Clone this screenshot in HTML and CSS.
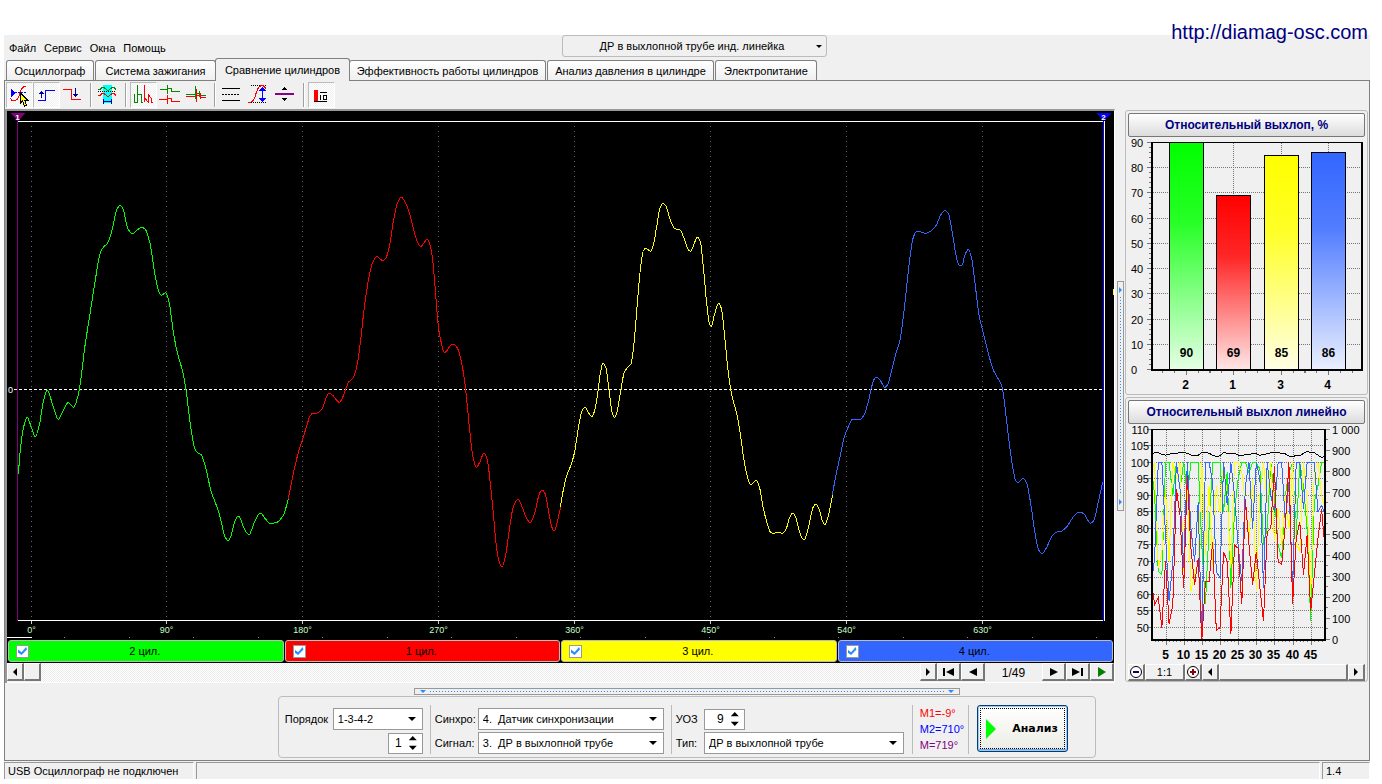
FILE: index.html
```html
<!DOCTYPE html>
<html lang="ru">
<head>
<meta charset="utf-8">
<title>Diamag — Сравнение цилиндров</title>
<link rel="stylesheet" href="styles.css">
</head>
<body>
<a class="site-link" href="http://diamag-osc.com">http://diamag-osc.com</a>
<div class="app">
  <header class="menubar">
    <nav class="menu">
      <button>Файл</button><button>Сервис</button><button>Окна</button><button>Помощь</button>
    </nav>
    <span class="pick pick-mode">
      <select aria-label="Режим"><option>ДР в выхлопной трубе инд. линейка</option></select>
    </span>
  </header>

  <nav class="tabs" role="tablist">
    <button class="tab tab-a" role="tab">Осциллограф</button>
    <button class="tab tab-b" role="tab">Система зажигания</button>
    <button class="tab tab-c active" role="tab" aria-selected="true">Сравнение цилиндров</button>
    <button class="tab tab-d" role="tab">Эффективность работы цилиндров</button>
    <button class="tab tab-e" role="tab">Анализ давления в цилиндре</button>
    <button class="tab tab-f" role="tab">Электропитание</button>
  </nav>

  <main class="page">
    <div class="toolbar">
      <button class="tool pressed" aria-label="Маркер"><svg viewBox="0 0 26 26"><path d="M4 16c2 4 7 4 9-2s3-10 7-10" stroke="#f00"/><path d="M5 7v8l4-4z" fill="#00f"/><path d="M9 10.500h11" stroke="#00f" stroke-dasharray="2 1"/><path d="M14.500 11v10l2-2 2 5 2-1-2-5h3z" fill="#ff0" stroke="#000"/></svg></button>
      <button class="tool pressed" aria-label="Фронт"><svg viewBox="0 0 26 26"><path d="M5 18.500h7.500v-10h9" stroke="#00f"/><path d="M8.500 16V10" stroke="#008"/><path d="M6 12h5L8.500 9z" fill="#008"/></svg></button>
      <button class="tool" aria-label="Спад"><svg viewBox="0 0 26 26"><path d="M3 7.500h8.500v10h9" stroke="#f00"/><path d="M15.500 6v7" stroke="#008"/><path d="M13 12h5l-2.500 3z" fill="#008"/></svg></button>
      <i class="sep"></i>
      <button class="tool" aria-label="Наложение"><svg viewBox="0 0 26 26"><path d="M8 3h9v18H8z" fill="#0ff"/><path d="M3 7.500h2l2-2h2l3 2.500h2l3-2.500h2l2 2" stroke="#080"/><path d="M3 9.500h18" stroke="#000" stroke-dasharray="1 1"/><path d="M3 13.500h2l2-2h2l3 2.500h2l3-2.500h2l2 2" stroke="#f00"/><path d="M8.500 17v5M16.500 17v5M8 19.500h9" stroke="#00a"/></svg></button>
      <i class="sep"></i>
      <button class="tool pressed" aria-label="Последовательно"><svg viewBox="0 0 26 26"><path d="M4.500 12v9M5 20.500h2.500M7.500 21V3M8 12.500h3.500v8h1.500" stroke="#080"/><path d="M14.500 12v8M14.500 18V3M15 16.500l3.500 4V12M19 13.500l2.500 3v3.500h1.500" stroke="#f00"/></svg></button>
      <button class="tool" aria-label="Каскад"><svg viewBox="0 0 26 26"><path d="M3 7.500h7.500M10.500 3v9M11 6.500h4M14.500 6v4M15 9.500h8" stroke="#080"/><path d="M2 17.500h8.500M10.500 13v9M11 16.500h4M14.500 16v4M15 19.500h8" stroke="#f00"/></svg></button>
      <button class="tool" aria-label="Вместе"><svg viewBox="0 0 26 26"><path d="M2 12.500h9M11.500 4v13M12 11.500h3M15.500 9v6M16 13.500h6" stroke="#080"/><path d="M2 14.500h9M12.500 7v13M13 13.500h4M16.500 11v6M17 15.500h5" stroke="#f00"/></svg></button>
      <i class="sep"></i>
      <button class="tool" aria-label="Линии"><svg viewBox="0 0 26 26"><path d="M3 6.500h18M3 18.500h18" stroke="#000"/><path d="M3 12.500h18" stroke="#000" stroke-dasharray="2 1"/></svg></button>
      <button class="tool" aria-label="Амплитуда"><svg viewBox="0 0 26 26"><path d="M5 3.500h16M5 20.500h16" stroke="#000" stroke-dasharray="1 1"/><path d="M2 20.500c5 0 6-2 8-9s4-8 7-8l3 3" stroke="#f00"/><path d="M16.500 7v11" stroke="#00f"/><path d="M13 9h7l-3.500-4.500zM13 16h7l-3.500 4.500z" fill="#00f"/></svg></button>
      <button class="tool" aria-label="Масштаб"><svg viewBox="0 0 26 26"><path d="M2 12h19" stroke="#808" stroke-width="2"/><path d="M8 8h6l-3-3zM8 16h6l-3 3z" fill="#000"/></svg></button>
      <i class="sep"></i>
      <button class="tool pressed" aria-label="Диаграмма"><svg viewBox="0 0 26 26"><path d="M6 8h4v11H6z" fill="#f00"/><path d="M6 19.500h13M12 10.500h7M12.500 13v5M15 13.500h3v4h-3z" stroke="#000"/></svg></button>
    </div>

    <div class="workspace">
      <section class="scope">
        <svg class="wave" viewBox="0 0 1107 528" id="wave" role="img" aria-label="Осциллограмма"></svg>
        <div class="channels">
          <label class="channel ch-green"><input type="checkbox" checked><span>2 цил.</span></label>
          <label class="channel ch-red"><input type="checkbox" checked><span>1 цил.</span></label>
          <label class="channel ch-yellow"><input type="checkbox" checked><span>3 цил.</span></label>
          <label class="channel ch-blue"><input type="checkbox" checked><span>4 цил.</span></label>
        </div>
        <div class="player">
          <button class="key k16" aria-label="Влево"><i class="arrow left"></i></button>
          <button class="key k16" aria-label="Ползунок"></button>
          <div class="track"></div>
          <button class="key k16" aria-label="Вправо"><i class="arrow right"></i></button>
          <button class="key k24" aria-label="В начало"><i class="bar"></i><i class="arrow big left"></i></button>
          <button class="key k24" aria-label="Назад"><i class="arrow big left"></i></button>
          <output class="frame-no">1/49</output>
          <button class="key k24" aria-label="Вперёд"><i class="arrow big right"></i></button>
          <button class="key k24" aria-label="В конец"><i class="arrow big right"></i><i class="bar"></i></button>
          <button class="key k24" aria-label="Воспроизвести"><i class="arrow big right play"></i></button>
        </div>
      </section>

      <div class="vsplit"><div class="grip-v"><i class="tip-r"></i><i class="dots-v"></i><i class="tip-r"></i></div></div>

      <aside class="side">
        <section class="card">
          <button class="card-title">Относительный выхлоп, %</button>
          <svg class="chart" viewBox="0 -1 237 255" id="bars" role="img" aria-label="Относительный выхлоп, %"></svg>
        </section>
        <section class="card">
          <button class="card-title">Относительный выхлоп линейно</button>
          <svg class="chart" viewBox="1 0 237 240" id="lines" role="img" aria-label="Относительный выхлоп линейно"></svg>
          <div class="zoombar">
            <button class="key k16" aria-label="Уменьшить"><svg class="lens" viewBox="0 0 14 14"><circle cx="7" cy="7" r="5.500" fill="#fff" stroke="#000"/><path d="M4 7h6" stroke="#008" stroke-width="2"/></svg></button>
            <button class="key k40">1:1</button>
            <button class="key k16" aria-label="Увеличить"><svg class="lens" viewBox="0 0 14 14"><circle cx="7" cy="7" r="5.500" fill="#fff" stroke="#000"/><path d="M4 7h6M7 4v6" stroke="#800" stroke-width="2"/></svg></button>
            <button class="key k16" aria-label="Влево"><i class="arrow left"></i></button>
            <button class="key grow" aria-label="Ползунок"></button>
            <button class="key k16" aria-label="Вправо"><i class="arrow right"></i></button>
          </div>
        </section>
      </aside>
    </div>

    <div class="grip-h"><i class="tip-d"></i><i class="dots-h"></i><i class="tip-d"></i></div>

    <form class="settings">
      <div class="col col-order">
        <div class="line"><label for="order">Порядок</label><span class="pick w90"><select id="order"><option>1-3-4-2</option></select></span></div>
        <div class="line end"><span class="spin w35"><input type="number" value="1" aria-label="Цилиндр"><i class="updown"></i></span></div>
      </div>
      <div class="col col-input">
        <div class="line"><label for="sync">Синхро:</label><span class="pick w186"><select id="sync"><option>4.&nbsp; Датчик синхронизации</option></select></span></div>
        <div class="line"><label for="signal">Сигнал:</label><span class="pick w186"><select id="signal"><option>3.&nbsp; ДР в выхлопной трубе</option></select></span></div>
      </div>
      <div class="col col-type">
        <div class="line"><label for="uoz">УОЗ</label><span class="spin w41"><input id="uoz" type="number" value="9"><i class="updown"></i></span></div>
        <div class="line"><label for="type">Тип:</label><span class="pick w200"><select id="type"><option>ДР в выхлопной трубе</option></select></span></div>
      </div>
      <div class="col col-marks">
        <span class="m-red">M1=-9°</span><span class="m-blue">M2=710°</span><span class="m-purple">M=719°</span>
      </div>
      <button class="analyze" type="button"><i class="go"></i><span>Анализ</span></button>
    </form>
  </main>

  <footer class="status">
    <span class="cell s-first">USB Осциллограф не подключен</span>
    <span class="cell s-mid"></span>
    <span class="cell s-last">1.4</span>
  </footer>
</div>
<script src="app.js"></script>
</body>
</html>
```
FILE: styles.css
```css
* { box-sizing: border-box; }
body {
  margin: 0;
  padding: 35px 12px 5px 4px;
  background: #fff;
  color: #000;
  font: 11px/14px "Liberation Sans", Arial, sans-serif;
}
button, select, input { font: inherit; color: inherit; margin: 0; padding: 0; border: 0; background: none; }
svg { display: block; fill: none; }
i { display: block; flex: none; }

.site-link {
  position: absolute;
  top: 20px;
  right: 14px;
  font-size: 20px;
  line-height: 24px;
  color: #000080;
  text-decoration: none;
}
.app { background: #f0f0f0; }

/* menu */
.menubar { display: grid; grid-template-columns: 1fr 265px 1fr; height: 22px; }
.menu { display: flex; gap: 8px; padding: 3px 0 0 5px; align-items: center; }
.pick { display: block; position: relative; height: 22px; background: #fff; border: 1px solid #999; }
.pick select { appearance: none; width: 100%; height: 100%; padding-left: 4px; }
.pick::after {
  content: "";
  position: absolute;
  right: 6px;
  top: 8px;
  border: 4px solid transparent;
  border-top-color: #000;
  border-bottom: 0;
  pointer-events: none;
}
.pick-mode { background: #f0f0f0; border-color: #bbb; border-radius: 3px; margin-left: 7px; width: 265px; }
.pick-mode select { text-align: center; text-align-last: center; padding-right: 8px; }
.pick-mode::after { right: 4px; top: 9px; border-width: 3px; border-bottom: 0; }

/* tabs */
.tabs { display: flex; align-items: flex-end; gap: 1px; padding-left: 2px; height: 23px; }
.tab {
  height: 20px;
  border: 1px solid #808080;
  border-bottom: 0;
  border-radius: 3px 3px 0 0;
  background: linear-gradient(#fff, #efefef);
  white-space: nowrap;
}
.tab.active { height: 23px; background: #f0f0f0; margin: 0 -2px -1px; position: relative; }
.tab-a { width: 88px; }
.tab-b { width: 121px; }
.tab-c { width: 135px; }
.tab-d { width: 197px; }
.tab-e { width: 167px; }
.tab-f { width: 102px; }

.page { border: 1px solid #808080; padding-bottom: 2px; }

/* toolbar */
.toolbar { display: flex; height: 28px; padding: 1px; }
.tool { width: 27px; height: 26px; border: 1px solid transparent; }
.tool svg { width: 26px; height: 26px; margin: -1px; shape-rendering: crispEdges; }
.tool.pressed {
  border-color: #bbb #fff #fff #bbb;
  background: repeating-conic-gradient(#fff 0 25%, #f0f0f0 0 50%) 0 0 / 2px 2px;
}
.sep { width: 2px; margin: 1px 3px; border-left: 1px solid #a0a0a0; border-right: 1px solid #fff; }

/* workspace */
.workspace { display: grid; grid-template-columns: minmax(0, 1fr) 10px 243px; padding-right: 1px; }
.scope { border: solid #999; border-width: 2px 1px 0 2px; border-right-color: #fff; }
.wave { width: 100%; height: auto; background: #000; }
.wave text { font-size: 9px; }
.channels { display: flex; gap: 1px; padding: 1px; background: #000; }
.channel { flex: 1; display: flex; align-items: center; height: 22px; padding: 0 22px 0 7px; border: 1px solid #bbb; border-radius: 3px; }
.channel span { flex: 1; text-align: center; }
.channel input { appearance: none; width: 13px; height: 13px; background: #fff; border: 1px solid #999; display: grid; place-items: center; }
.channel input:checked::after {
  content: "";
  width: 9px;
  height: 8px;
  background: #2a8dfa;
  clip-path: polygon(0 30%, 40% 65%, 90% 0, 100% 30%, 40% 100%, 0 70%);
}
.ch-green { background: #0f0; }
.ch-red { background: #f00; }
.ch-yellow { background: #ff0; }
.ch-blue { background: #36f; }

.key {
  display: flex;
  align-items: center;
  justify-content: center;
  gap: 1px;
  height: 18px;
  background: #f0f0f0;
  border: 1px solid #fff;
  border-right: 2px solid #777;
  border-bottom: 2px solid #777;
}
.k16 { flex: 0 0 17px; }
.k24 { flex: 0 0 24px; }
.k40 { flex: 0 0 40px; }
.grow { flex: 1; }
.player { display: flex; height: 20px; border-bottom: 1px solid #fff; }
.track { flex: 1; background: repeating-conic-gradient(#fff 0 25%, #ececec 0 50%) 0 0 / 2px 2px; }
.frame-no { flex: 0 0 57px; text-align: center; line-height: 20px; font-size: 12px; }
.arrow { border: 4px solid transparent; }
.arrow.left { border-right-color: #000; border-left: 0; }
.arrow.right { border-left-color: #000; border-right: 0; }
.arrow.big { border-width: 4px 8px; }
.arrow.big.left { border-left: 0; }
.arrow.big.right { border-right: 0; }
.arrow.play { border-left-color: #008000; border-top-width: 5px; border-bottom-width: 5px; }
.bar { width: 2px; height: 8px; background: #000; }

/* splitters */
.vsplit { display: flex; justify-content: center; align-items: center; }
.grip-v { display: flex; flex-direction: column; align-items: center; width: 7px; height: 230px; border: 1px solid #999; padding: 5px 0; gap: 4px; }
.dots-v { flex: 1; width: 1px; background: repeating-linear-gradient(#2a8dfa 0 1px, transparent 1px 3px); }
.tip-r { border: 3px solid transparent; border-left-color: #2a8dfa; border-right: 0; }
.grip-h { display: flex; align-items: center; width: 40%; height: 7px; margin: 5px auto 1px; border: 1px solid #999; padding: 0 5px; gap: 4px; }
.dots-h { flex: 1; height: 1px; background: repeating-linear-gradient(90deg, #2a8dfa 0 1px, transparent 1px 3px); }
.tip-d { border: 3px solid transparent; border-top-color: #2a8dfa; border-bottom: 0; }

/* side charts */
.side { display: flex; flex-direction: column; gap: 2px; padding-top: 1px; }
.card { border: 1px solid #bbb; border-radius: 3px; padding: 2px; }
.card:last-child { padding-bottom: 0; }
.card-title {
  display: block;
  width: 100%;
  height: 24px;
  border: 1px solid #777;
  border-radius: 2px;
  background: linear-gradient(#fff, #dcdcdc);
  color: #000080;
  font-size: 12px;
  font-weight: bold;
}
.chart { width: 100%; height: auto; }
.chart text { fill: #000; font-size: 11px; }
.chart .strong { font-size: 12px; font-weight: bold; }
.zoombar { display: flex; }
.zoombar .key { height: 17px; }
.lens { flex: none; width: 14px; height: 14px; }

/* settings */
.settings {
  display: flex;
  width: fit-content;
  margin: 0 auto;
  padding: 8px 27px 3px 6px;
  border: 1px solid #bbb;
  border-radius: 4px;
}
.col { display: flex; flex-direction: column; gap: 2px; padding: 3px 7px 0 0; margin-right: 4px; border-right: 1px solid #bbb; }
.line { display: flex; align-items: center; justify-content: space-between; height: 22px; }
.line.end { justify-content: flex-end; }
.col-order .line { width: 138px; }
.col-input .line { width: 229px; }
.col-type .line { justify-content: flex-start; }
.col-type label { width: 28px; }
.col-type { padding-right: 8px; margin-right: 7px; }
.w35 { width: 35px; }
.w41 { width: 41px; }
.w90 { width: 90px; }
.w186 { width: 186px; }
.w200 { width: 200px; }
.spin { display: flex; align-items: center; height: 21px; background: #fff; border: 1px solid #999; }
.spin input { appearance: textfield; flex: 1; width: 10px; text-align: right; font-size: 12px; padding-right: 4px; }
.spin input::-webkit-inner-spin-button { display: none; }
.updown { width: 8px; height: 14px; margin: 0 5px 0 3px; background: #000; clip-path: polygon(50% 0, 100% 30%, 0 30%, 50% 0, 50% 100%, 0 70%, 100% 70%, 50% 100%); }
.col-marks { gap: 0; padding: 0 4px 0 0; margin-right: 8px; }
.col-marks span { line-height: 16px; }
.m-red { color: #f00; }
.m-blue { color: #00f; }
.m-purple { color: #800080; }
.analyze {
  display: flex;
  align-items: center;
  width: 91px;
  height: 47px;
  padding: 0 9px 0 8px;
  gap: 16px;
  border: 1px solid #003c74;
  border-radius: 3px;
  background: linear-gradient(#fff, #ecece4);
  box-shadow: inset 0 0 0 1px #9cc8f8, inset 0 -2px 0 #6aa8e8;
  outline: 1px dotted #000;
  outline-offset: -4px;
  font-family: "DejaVu Sans", sans-serif;
  font-weight: bold;
}
.go { border: 10px solid transparent; border-left-color: #0f0; border-right: 0; }

/* status */
.status { display: flex; gap: 2px; padding: 1px 0 0; height: 18px; }
.cell { border: solid #999; border-width: 1px 0 0 1px; padding-left: 3px; line-height: 16px; border-right: 1px solid #fff; }
.s-first { width: 190px; }
.s-mid { flex: 1; }
.s-last { width: 48px; }
```
FILE: app.js
```js
const NS = "http://www.w3.org/2000/svg";

function add(parent, tag, attrs, text) {
  const el = document.createElementNS(NS, tag);
  for (const key in attrs) el.setAttribute(key, attrs[key]);
  if (text !== undefined) el.textContent = text;
  parent.appendChild(el);
  return el;
}
function line(parent, x1, y1, x2, y2, stroke, extra) {
  return add(parent, "path", Object.assign({ d: `M${x1} ${y1}L${x2} ${y2}`, stroke, "shape-rendering": "crispEdges" }, extra));
}

/* Monotone cubic curve: no overshoot at peaks and troughs. */
function smooth(pts) {
  const n = pts.length, s = [], m = [];
  for (let i = 0; i < n - 1; i++) s.push((pts[i + 1][1] - pts[i][1]) / (pts[i + 1][0] - pts[i][0]));
  m[0] = s[0];
  m[n - 1] = s[n - 2];
  for (let i = 1; i < n - 1; i++) m[i] = s[i - 1] * s[i] <= 0 ? 0 : 2 * s[i - 1] * s[i] / (s[i - 1] + s[i]);
  let d = `M${pts[0]}`;
  for (let i = 0; i < n - 1; i++) {
    const [x0, y0] = pts[i], [x1, y1] = pts[i + 1], h = (x1 - x0) / 3;
    d += `C${(x0 + h).toFixed(2)} ${(y0 + m[i] * h).toFixed(2)} ${(x1 - h).toFixed(2)} ${(y1 - m[i + 1] * h).toFixed(2)} ${x1.toFixed(2)} ${y1.toFixed(2)}`;
  }
  return d;
}

/* Samples are x,y pairs, three units to a screen pixel, from each channel's start. */
const channels = [
  { color: "#0f0", start: -7, samples: "55,882 62,800 70,745 81,712 95,745 106,770 118,735 130,665 142,631 158,675 175,718 190,690 205,668 221,682 232,655 240,615 256,490 268,415 285,305 302,215 312,200 322,190 335,155 350,90 360,76 368,84 384,147 397,161 412,150 424,142 436,148 450,190 465,285 475,330 484,346 497,338 506,360 520,455 530,510 548,575 558,630 572,740 584,805 592,818 604,825 615,855 635,940 645,965 660,1010 675,1070 684,1082 692,1070 706,1020 716,1008 732,1045 747,1064 762,1030 781,999 795,1015 810,1030 828,1028 850,1006 865,957" },
  { color: "#f00", start: 273, samples: "25,957 35,905 48,845 60,800 68,778 80,738 90,708 98,700 112,699 127,685 138,655 148,639 160,648 178,667 188,652 198,625 206,606 216,598 225,580 233,545 242,480 252,390 262,320 270,275 280,243 291,229 300,237 309,242 318,234 328,200 340,125 352,70 364,52 378,72 390,105 400,145 412,185 422,200 431,190 442,177 450,195 458,240 466,330 474,430 482,480 493,518 502,510 512,496 521,492 535,510 547,560 556,620 568,740 578,825 589,862 600,845 612,819 622,840 632,920 640,1000 648,1090 656,1140 666,1161 676,1130 688,1050 700,980 714,957 726,980 740,1015 751,1028 765,995 778,942 786,930 795,940 805,990 815,1040 823,1053 832,1025 842,980" },
  { color: "#ff0", start: 543, samples: "31,980 40,930 50,888 63,855 73,820 85,745 95,695 105,682 115,697 125,710 134,692 143,640 151,580 159,549 168,565 177,630 186,695 194,713 201,695 212,635 222,580 232,563 243,552 252,490 262,370 272,260 280,212 288,205 302,214 311,190 320,140 330,85 339,70 348,78 360,118 375,146 390,150 402,175 414,208 421,214 430,198 442,171 451,185 460,260 470,370 478,430 484,439 493,405 506,370 514,385 524,470 534,570 545,645 560,700 570,755 582,840 594,897 603,914 618,901 628,920 638,975 650,1025 662,1057 672,1060 683,1057 698,1060 708,1048 720,1010 729,999 738,1015 750,1060 762,1080 771,1060 782,1010 790,980 798,972 808,990 817,1022 825,1034 833,1015 848,945" },
  { color: "#36f", start: 813, samples: "37,945 47,890 60,830 72,775 86,738 97,718 120,718 132,705 145,665 155,620 163,597 170,591 180,600 195,622 204,612 215,570 228,520 240,480 250,410 260,320 270,230 280,172 290,154 303,156 315,160 330,155 348,137 362,105 375,91 386,103 398,165 410,235 417,255 426,255 435,224 445,208 455,235 465,310 478,410 490,460 505,520 520,570 535,597 546,620 556,690 568,790 578,860 587,902 594,908 609,895 620,910 632,970 645,1060 656,1110 666,1121 680,1102 695,1070 710,1056 725,1053 742,1038 762,1008 778,996 790,1000 812,1030 821,1022 835,965 848,907" }
];

function drawWave() {
  const svg = document.getElementById("wave");
  for (let i = 0; i < 8; i++) {
    const x = (i ? 159.5 + (i - 1) * 136 : 24.5);
    line(svg, x, 15, x, 509, "#666", { "stroke-dasharray": "1 4" });
    line(svg, x, 510, x, 513, "#ccc");
    add(svg, "text", { x, y: 522, fill: "#c8ffc8", "text-anchor": "middle" }, i * 90 + "°");
  }
  for (let x = 57; x < 1107; x += 64.5) line(svg, x, 526.5, x + 1, 526.5, "#888");
  line(svg, 0, 526.5, 25, 526.5, "#fff");
  line(svg, 11, 10.5, 1097, 10.5, "#fff");
  line(svg, 11, 509.5, 1098, 509.5, "#fff");
  line(svg, 1097.5, 10, 1097.5, 510, "#fff");
  line(svg, 1096.5, 10, 1096.5, 510, "#00f");
  line(svg, 10.5, 4, 10.5, 510, "#800080");
  line(svg, 7, 278.5, 1097, 278.5, "#fff", { "stroke-dasharray": "3 2" });
  add(svg, "text", { x: 1, y: 282, fill: "#fff" }, "0");
  line(svg, 1106.5, 178, 1106.5, 184, "#ff0");
  for (const ch of channels) {
    const pts = ch.samples.split(" ").map(p => {
      const [x, y] = p.split(",").map(Number);
      return [ch.start + x / 3, 69 + y / 3];
    });
    add(svg, "path", { d: smooth(pts), stroke: ch.color, "shape-rendering": "crispEdges" });
  }
  for (const [x, color, label] of [[10.5, "#800080", "1"], [1096.5, "#00f", "2"]]) {
    add(svg, "path", { d: `M${x - 7} 2h15l-7.500 8z`, fill: color });
    add(svg, "text", { x, y: 9, fill: "#fff", "text-anchor": "middle", style: "font-size:8px;font-weight:bold" }, label);
  }
}

function drawBars() {
  const svg = document.getElementById("bars");
  const top = 4.5, bottom = 231.5, left = 23, right = 234;
  const y = v => Math.round(bottom - v * (bottom - top) / 90 - 0.5) + 0.5;
  const defs = add(svg, "defs", {});
  for (let v = 0; v <= 90; v += 10) {
    if (v && v < 90) line(svg, left, y(v), right, y(v), "#777", { "stroke-dasharray": "1 1" });
    line(svg, 19, y(v), left, y(v), "#777");
    for (let k = 2; k < 10 && v < 90; k += 2) line(svg, 21, y(v + k), left, y(v + k), "#777");
    add(svg, "text", { x: 3, y: y(v) + 4 }, v);
  }
  const bars = [["2", 90, "#00ff00", 58.5], ["1", 69, "#ff0000", 105.5], ["3", 85, "#ffff00", 153.5], ["4", 86, "#3366ff", 200.5]];
  bars.forEach(([name, value, color, x], i) => {
    const g = add(defs, "linearGradient", { id: "fill" + i, x1: 0, y1: 0, x2: 0, y2: 1 });
    add(g, "stop", { offset: 0, "stop-color": color });
    add(g, "stop", { offset: 0.35, "stop-color": color, "stop-opacity": 0.85 });
    add(g, "stop", { offset: 1, "stop-color": color, "stop-opacity": 0.1 });
    line(svg, x, top, x, bottom, "#777", { "stroke-dasharray": "1 1" });
    add(svg, "rect", { x: x - 17, y: y(value), width: 34, height: bottom - y(value), fill: "#fff" });
    add(svg, "rect", { x: x - 17, y: y(value), width: 34, height: bottom - y(value), fill: `url(#fill${i})`, stroke: "#000", "shape-rendering": "crispEdges" });
    add(svg, "text", { x, y: 219, class: "strong", "text-anchor": "middle" }, value);
    add(svg, "text", { x: x - 1, y: 251, class: "strong", "text-anchor": "middle" }, name);
    for (let k = -24; k <= 24; k += 12) line(svg, x + k, 232, x + k, k ? 235 : 237, "#777");
  });
  add(svg, "path", { d: "M23 4.500H235", stroke: "#000", "shape-rendering": "crispEdges" });
  add(svg, "path", { d: "M24 4V232H234V4", stroke: "#000", "stroke-width": 2, "shape-rendering": "crispEdges" });
}

const history = {
  "#00ff00": [100, 90, 67, 66, 100, 100, 90, 100, 92, 100, 90, 100, 100, 100, 75, 57, 80, 100, 100, 100, 85, 97, 62, 85, 95, 100, 100, 97, 100, 100, 98, 75, 80, 100, 90, 75, 71, 90, 97, 100, 78, 100, 93, 80, 52, 88, 93, 100, 100],
  "#ffff00": [97, 100, 68, 73, 92, 70, 100, 95, 100, 67, 95, 61, 66, 70, 100, 72, 93, 69, 93, 85, 100, 90, 68, 100, 100, 97, 88, 77, 95, 61, 90, 100, 88, 100, 76, 86, 75, 90, 80, 100, 75, 73, 100, 88, 60, 97, 100, 90, 86],
  "#3366ff": [62, 71, 100, 100, 78, 58, 70, 100, 92, 68, 100, 80, 70, 88, 46, 100, 100, 94, 67, 65, 100, 87, 100, 90, 75, 64, 93, 100, 80, 100, 95, 62, 100, 90, 85, 100, 100, 82, 94, 62, 100, 100, 86, 100, 100, 100, 85, 87, 84],
  "#ff0000": [65, 57, 59, 50, 70, 51, 57, 92, 84, 62, 96, 74, 63, 71, 46, 64, 64, 76, 49, 50, 73, 70, 48, 75, 74, 57, 89, 75, 63, 73, 62, 52, 79, 80, 99, 70, 69, 81, 100, 57, 77, 82, 66, 78, 55, 66, 77, 86, 73],
  "#000000": [102, 103, 103, 102.5, 102.2, 102.5, 102.8, 102.8, 103, 103, 102.8, 102.3, 102, 102.2, 103, 103, 102.8, 102.2, 101.8, 102, 103, 102.8, 102.6, 102.8, 102.2, 102, 102.4, 102.3, 102.8, 102.6, 102.2, 102.5, 102.6, 102.9, 103, 103, 102.8, 102.6, 102, 101.7, 102.2, 102, 102.8, 103.4, 103, 103, 102.2, 101.5, 101.9]
};

function drawLines() {
  const svg = document.getElementById("lines");
  const x = n => 24 + (n - 1) * 3.63, y = v => 5.5 + (110 - v) * 3.3;
  for (let v = 110; v >= 50; v -= 5) {
    const py = Math.round(y(v)) - 0.5;
    line(svg, 25, py, 198, py, "#777", { "stroke-dasharray": "1 1" });
    line(svg, 20, py, 24, py, "#777");
    add(svg, "text", { x: 22, y: py + 4, "text-anchor": "end" }, v);
  }
  for (let v = 0; v <= 1000; v += 50) {
    const py = Math.round(216 - v * 0.2105) - 0.5, major = v % 100 === 0;
    line(svg, 198, py, major ? 203 : 201, py, "#777");
    if (major) add(svg, "text", { x: 205, y: py + 4 }, v === 1000 ? "1 000" : v);
  }
  for (let n = 2; n < 49; n++) {
    const px = Math.round(x(n)) + 0.5, major = n % 5 === 0;
    line(svg, px, 216, px, major ? 221 : 218, "#777");
    if (!major) continue;
    line(svg, px, 6, px, 215, "#777", { "stroke-dasharray": "1 1" });
    add(svg, "text", { x: px - 1, y: 235, class: "strong", "text-anchor": "middle" }, n);
  }
  for (const color in history) {
    add(svg, "polyline", { points: history[color].map((v, i) => x(i + 1).toFixed(1) + "," + y(v).toFixed(1)).join(" "), stroke: color, "shape-rendering": "crispEdges" });
  }
  add(svg, "path", { d: "M24 5.500H199", stroke: "#000", "shape-rendering": "crispEdges" });
  add(svg, "path", { d: "M25 5V216H198V5", stroke: "#000", "stroke-width": 2, "shape-rendering": "crispEdges" });
}

drawWave();
drawBars();
drawLines();
```
